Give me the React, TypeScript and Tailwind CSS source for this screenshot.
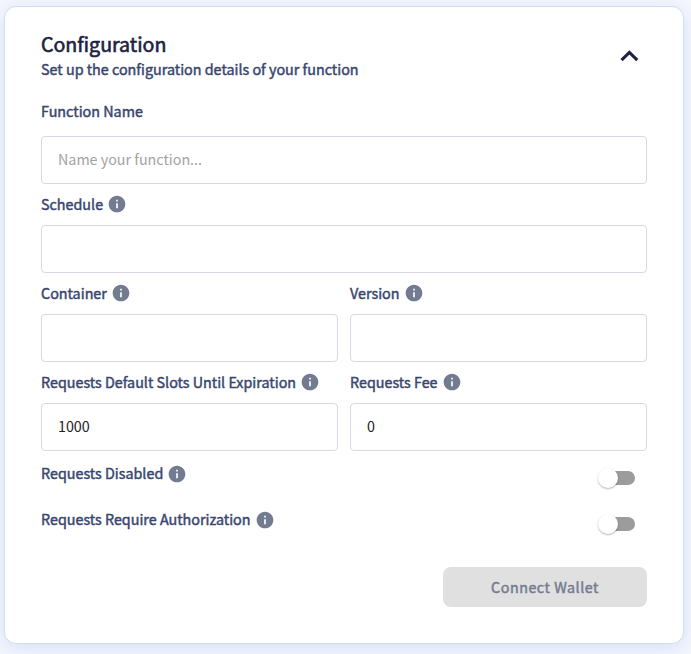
import type { ReactNode } from 'react';

function InfoIcon() {
  return (
    <svg viewBox="0 0 24 24" className="size-5 shrink-0 fill-[#737b90]">
      <path d="M12 2C6.48 2 2 6.48 2 12s4.48 10 10 10 10-4.48 10-10S17.52 2 12 2zm1 15h-2v-6h2v6zm0-8h-2V7h2v2z" />
    </svg>
  );
}

function Label({ children, info = true, raised = false }: { children: ReactNode; info?: boolean; raised?: boolean }) {
  return (
    <div className="flex h-5 items-center gap-1 text-[14.33px] leading-5 text-[#38466f] [-webkit-text-stroke:0.45px_#38466f]">
      <span className={raised ? 'whitespace-nowrap pb-0.5' : 'whitespace-nowrap'}>{children}</span>
      {info && <InfoIcon />}
    </div>
  );
}

function TextInput({ value, placeholder }: { value?: string; placeholder?: string }) {
  return (
    <input
      className="block h-12 w-full rounded-[4px] border border-[#d8d9e5] bg-white px-4 pb-[3px] text-[14.3px] text-[#212121] outline-none placeholder:text-[#a3a3a3]"
      defaultValue={value}
      placeholder={placeholder}
    />
  );
}

function Field({ label, value }: { label: string; value?: string }) {
  return (
    <div className="flex min-w-0 flex-1 flex-col gap-[11px]">
      <Label>{label}</Label>
      <TextInput value={value} />
    </div>
  );
}

function ToggleRow({ label }: { label: string }) {
  return (
    <div className="flex h-[46px] items-start justify-between">
      <Label raised>{label}</Label>
      <div className="mt-[7px] mr-3 flex h-3.5 w-[34px] items-center rounded-full bg-[#9c9c9c]">
        <span className="-ml-[3px] size-5 shrink-0 rounded-full bg-white shadow-[0_1px_2px_rgba(0,0,0,0.3)]" />
      </div>
    </div>
  );
}

export default function App() {
  return (
    <main className="h-[654px] w-[691px] overflow-hidden bg-[#f6f8fd] pt-1.5 pl-1 font-['Noto_Sans_CJK_SC','Noto_Sans',sans-serif]">
      <section className="h-[638px] w-[680px] rounded-xl border border-[#cce0ea] bg-white pt-[25px] pr-9 pl-9 shadow-[0_4px_20px_rgba(180,196,245,0.5)]">
        <header className="flex justify-between">
          <div>
            <h1 className="h-6 text-[19.6px] leading-6 text-[#1c2240] [-webkit-text-stroke:0.6px_#1c2240]">Configuration</h1>
            <p className="mt-[3px] text-[14.33px] leading-5 text-[#38466f] [-webkit-text-stroke:0.45px_#38466f]">Set up the configuration details of your function</p>
          </div>
          <svg viewBox="0 0 24 24" className="mt-2 mr-0.5 size-8 fill-none stroke-[#1c2240]">
            <path d="M6.4 15.1L12.3 9.3l5.9 5.8" strokeWidth="2.3" />
          </svg>
        </header>
        <form className="mt-[22px] flex flex-col gap-2.5">
          <div className="flex flex-col gap-[15px]">
            <Label info={false}>Function Name</Label>
            <TextInput placeholder="Name your function..." />
          </div>
          <Field label="Schedule" />
          <div className="flex gap-3">
            <Field label="Container" />
            <Field label="Version" />
          </div>
          <div className="flex gap-3">
            <Field label="Requests Default Slots Until Expiration" value="1000" />
            <Field label="Requests Fee" value="0" />
          </div>
          <div className="mt-[3px]">
            <ToggleRow label="Requests Disabled" />
            <ToggleRow label="Requests Require Authorization" />
          </div>
          <button type="button" className="mt-px h-10 w-[204px] self-end rounded-lg bg-[#e0e0e0] text-[14.3px] tracking-[0.53px] text-[#737b90] [-webkit-text-stroke:0.45px_#737b90]">
            Connect Wallet
          </button>
        </form>
      </section>
    </main>
  );
}
